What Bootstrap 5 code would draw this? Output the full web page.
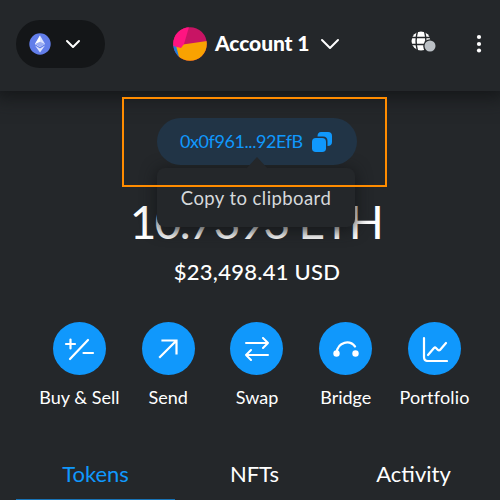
<!DOCTYPE html>
<html lang="en">
<head>
<meta charset="utf-8">
<meta name="viewport" content="width=device-width, initial-scale=1">
<title>Wallet</title>
<link href="https://cdn.jsdelivr.net/npm/bootstrap@5.3.0/dist/css/bootstrap.min.css" rel="stylesheet">
<style>
body{width:500px;height:500px;background:#24272a;color:#fff;font-family:Lato,"Liberation Sans",sans-serif;line-height:1}
svg{display:block;flex:none}
.topbar{height:91px;box-shadow:0 0 18px 6px #141618;padding:0 10px 4px 16px}
.network{width:89px;height:48px;background:#141618;padding-left:13px;gap:14px}
.account{margin-left:68px;gap:8px}
.account-name{font-size:21px;font-weight:900;letter-spacing:-.1px;width:97px;padding-bottom:2px}
.globe{margin:-4px 0 0 71px}
.menu{margin-left:39px}
.callout{width:265px;height:90px;margin:6px 0 0 122px;border:2px solid #ff8c00;padding:19px 0 0 33px;z-index:3}
.address{width:200px;height:47px;background:#213446;color:#1098fc;font-size:18px;padding-left:23px;gap:8px}
.address-text{width:124px;letter-spacing:-.42px;padding-bottom:2px}
.copy-tip{position:absolute;left:157px;top:168px;width:198px;height:59px;z-index:2;background:#24272a;color:#d6d9dc;border-radius:8px;font-size:18.5px;letter-spacing:.42px;padding-top:21px;box-shadow:0 2px 16px #141618}
.tip-arrow{position:absolute;left:246px;top:157px;width:22px;height:12px;z-index:4;background:#24272a;clip-path:polygon(50% 0,100% 100%,0 100%)}
.balance{font-size:46px;letter-spacing:-1.75px;margin-top:12px;padding-left:12px;height:46px}
.fiat{font-size:22px;font-weight:500;letter-spacing:.25px;margin-top:16px;padding-left:14px;height:22px}
.actions{padding:0 21px 0 35px;margin-top:39px}
.action{width:89px;font-size:18px;gap:13px}
.action:last-child{letter-spacing:.2px}
.disc{width:53px;height:53px;background:#1098fc}
.tabs{margin-top:57px;font-size:22px;padding:0 5px 0 16px;height:42px}
.tab-item{width:159px;height:38px}
.tab-on{color:#1098fc;border-bottom:2px solid #1774b8}
</style>
<script src="https://cdn.jsdelivr.net/npm/bootstrap@5.3.0/dist/js/bootstrap.bundle.min.js"></script>
</head>
<body class="overflow-hidden position-relative text-nowrap">
<header class="topbar d-flex align-items-center">
  <div class="network rounded-pill d-flex align-items-center">
    <svg width="22" height="22" viewBox="0 0 22 22"><circle cx="11" cy="11" r="10.7" fill="#627eea"/><path d="M11 2.500 16 11 11 14 6 11Z" fill="#dce3ff"/><path d="M11 2.500V14L6 11Z" fill="#fff"/><path d="m6 11 5-2.300 5 2.300-5 3Z" fill="#9badf2"/><path d="m6 12.500 5 3 5-3-5 7Z" fill="#dce3ff"/></svg>
    <svg width="16" height="10" viewBox="0 0 16 10" fill="none" stroke="#fff" stroke-width="2" stroke-linecap="round" stroke-linejoin="round"><path d="m2 2 6 6 6-6"/></svg>
  </div>
  <div class="account d-flex align-items-center">
    <svg width="34" height="34" viewBox="0 0 34 34"><defs><clipPath id="face"><circle cx="17" cy="17" r="16.800"/></clipPath></defs><g clip-path="url(#face)"><path fill="#c81464" d="M0 0h34v34H0z"/><path fill="#1b7fe0" d="M0 18h6v12H0z"/><path fill="#f9a201" d="m3 18.500 31-4.500v20H7z"/><path fill="#ff1481" d="M0 0h16L11 17l-3 4-8-2z"/></g></svg>
    <span class="account-name">Account 1</span>
    <svg width="20" height="12" viewBox="0 0 20 12" fill="none" stroke="#fff" stroke-width="2" stroke-linecap="round" stroke-linejoin="round"><path d="m2 2 8 8 8-8"/></svg>
  </div>
  <svg class="globe" width="26" height="22" viewBox="0 0 26 22"><circle cx="10" cy="10" r="9.500" fill="#fff"/><g fill="none" stroke="#24272a" stroke-width="1.400"><path d="M0 6.500h20M0 13.500h20"/><path d="M6.500 0q-2.800 10 0 20M13.500 0q2.800 10 0 20"/></g><circle cx="19" cy="15" r="6.800" fill="#24272a"/><circle cx="19" cy="15" r="5.500" fill="#bbc0c5"/></svg>
  <svg class="menu" width="6" height="20" viewBox="0 0 6 20" fill="#fff"><circle cx="3" cy="3" r="2.100"/><circle cx="3" cy="10" r="2.100"/><circle cx="3" cy="16.500" r="2.100"/></svg>
</header>
<main>
  <div class="callout position-relative">
    <div class="address rounded-pill d-flex align-items-center"><span class="address-text">0x0f961...92EfB</span>
      <svg width="20" height="20" viewBox="0 0 20 20" fill="#1098fc"><path d="M9 0h7q4 0 4 4v6q0 4-4.500 4V9q0-4.500-4.500-4.500H5.500Q5.500 0 9 0Z"/><rect y="6" width="14" height="14" rx="3.800"/></svg>
    </div>
  </div>
  <div class="copy-tip text-center"><span class="tip-text">Copy to clipboard</span></div>
  <div class="tip-arrow"></div>
  <div class="balance text-center"><span class="balance-text">10.7393 ETH</span></div>
  <div class="fiat text-center"><span class="fiat-text">$23,498.41 USD</span></div>
  <div class="actions d-flex">
    <div class="action d-flex flex-column align-items-center"><div class="disc rounded-circle d-flex"><svg class="m-auto" width="32" height="26" viewBox="0 0 32 26" fill="none" stroke="#fff" stroke-width="2.200" stroke-linecap="round"><path d="M3 8h9M7.500 3.500v9M7 23 25 4M20.500 17H30"/></svg></div><span>Buy &amp; Sell</span></div>
    <div class="action d-flex flex-column align-items-center"><div class="disc rounded-circle d-flex"><svg class="m-auto" width="22" height="22" viewBox="0 0 22 22" fill="none" stroke="#fff" stroke-width="2.200" stroke-linecap="square"><path d="M3 19 19 3M5.500 2.500h14v13"/></svg></div><span>Send</span></div>
    <div class="action d-flex flex-column align-items-center"><div class="disc rounded-circle d-flex"><svg class="m-auto" width="26" height="24" viewBox="0 0 26 24" fill="none" stroke="#fff" stroke-width="2" stroke-linecap="round" stroke-linejoin="round"><path d="M2 6h22M19 1l5 5-5 5M24 18H2M7 13l-5 5 5 5"/></svg></div><span>Swap</span></div>
    <div class="action d-flex flex-column align-items-center"><div class="disc rounded-circle d-flex"><svg class="m-auto" width="26" height="16" viewBox="0 0 26 16"><path d="M3.500 12C5 0 17-1 22 5.500" fill="none" stroke="#fff" stroke-width="2.200" stroke-linecap="round"/><circle cx="3.500" cy="12.500" r="3.200" fill="#fff"/><circle cx="22.500" cy="12.500" r="3.200" fill="#fff"/></svg></div><span>Bridge</span></div>
    <div class="action d-flex flex-column align-items-center"><div class="disc rounded-circle d-flex"><svg class="m-auto" width="26" height="26" viewBox="0 0 26 26" fill="none" stroke="#fff" stroke-width="2.200" stroke-linecap="round" stroke-linejoin="round"><path d="M2 2v19q0 4 4 4h19"/><path d="m6 19 6-7q1-1 2 0l2 2q1 1 2 0l6-7"/></svg></div><span>Portfolio</span></div>
  </div>
  <nav class="tabs d-flex">
    <div class="tab-item tab-on text-center">Tokens</div>
    <div class="tab-item text-center">NFTs</div>
    <div class="tab-item text-center">Activity</div>
  </nav>
</main>
</body>
</html>
